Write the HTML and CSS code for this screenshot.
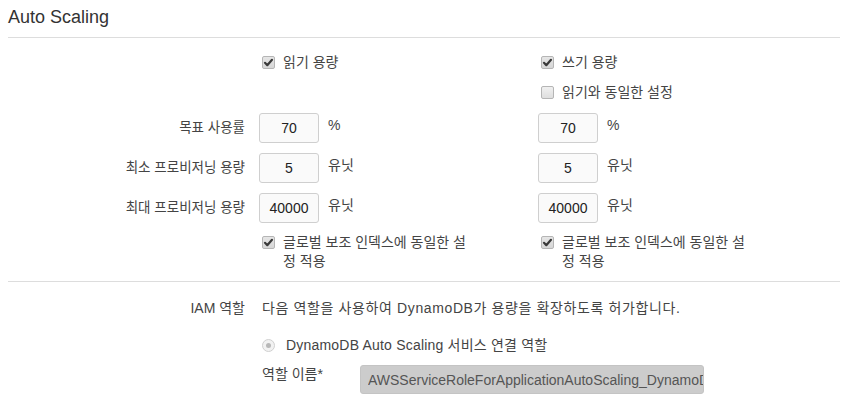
FILE: index.html
```html
<!DOCTYPE html>
<html lang="ko">
<head>
<meta charset="utf-8">
<title>Auto Scaling</title>
<link rel="stylesheet" href="styles.css">
</head>
<body>
<div class="panel">
  <h2 class="title">Auto Scaling</h2>
  <hr class="rule">
  <div class="grid">
    <div class="label"></div>
    <div class="cell"><label class="check"><span class="box on"><svg viewBox="0 0 13 13" width="13" height="13"><path d="M3 6.8 L5.3 9.2 L10 3.8" fill="none" stroke="#3a3a3a" stroke-width="2.2" stroke-linecap="round" stroke-linejoin="round"/></svg></span><span>읽기 용량</span></label></div>
    <div class="cell"><label class="check"><span class="box on"><svg viewBox="0 0 13 13" width="13" height="13"><path d="M3 6.8 L5.3 9.2 L10 3.8" fill="none" stroke="#3a3a3a" stroke-width="2.2" stroke-linecap="round" stroke-linejoin="round"/></svg></span><span>쓰기 용량</span></label></div>

    <div class="label"></div>
    <div class="cell"></div>
    <div class="cell"><label class="check"><span class="box"></span><span>읽기와 동일한 설정</span></label></div>
  </div>

  <div class="grid fields">
    <div class="label fl">목표 사용률</div>
    <div class="cell field"><input class="num" type="text" value="70" readonly><span class="unit">%</span></div>
    <div class="cell field"><input class="num" type="text" value="70" readonly><span class="unit">%</span></div>

    <div class="label fl">최소 프로비저닝 용량</div>
    <div class="cell field"><input class="num" type="text" value="5" readonly><span class="unit">유닛</span></div>
    <div class="cell field"><input class="num" type="text" value="5" readonly><span class="unit">유닛</span></div>

    <div class="label fl">최대 프로비저닝 용량</div>
    <div class="cell field"><input class="num" type="text" value="40000" readonly><span class="unit">유닛</span></div>
    <div class="cell field"><input class="num" type="text" value="40000" readonly><span class="unit">유닛</span></div>
  </div>

  <div class="grid gsi">
    <div class="label"></div>
    <div class="cell"><label class="check wrap"><span class="box on"><svg viewBox="0 0 13 13" width="13" height="13"><path d="M3 6.8 L5.3 9.2 L10 3.8" fill="none" stroke="#3a3a3a" stroke-width="2.2" stroke-linecap="round" stroke-linejoin="round"/></svg></span><span class="wraptext">글로벌 보조 인덱스에 동일한 설정 적용</span></label></div>
    <div class="cell"><label class="check wrap"><span class="box on"><svg viewBox="0 0 13 13" width="13" height="13"><path d="M3 6.8 L5.3 9.2 L10 3.8" fill="none" stroke="#3a3a3a" stroke-width="2.2" stroke-linecap="round" stroke-linejoin="round"/></svg></span><span class="wraptext">글로벌 보조 인덱스에 동일한 설정 적용</span></label></div>
  </div>

  <hr class="rule rule2">

  <div class="iam">
    <div class="label">IAM 역할</div>
    <div class="iam-body">
      <div class="desc">다음 역할을 사용하여 DynamoDB가 용량을 확장하도록 허가합니다.</div>
      <label class="radio"><span class="dot"></span><span class="radio-text">DynamoDB Auto Scaling 서비스 연결 역할</span></label>
      <div class="role">
        <span class="role-label">역할 이름*</span>
        <input class="role-input" type="text" value="AWSServiceRoleForApplicationAutoScaling_DynamoDBTable" disabled>
      </div>
    </div>
  </div>
</div>
</body>
</html>
```

FILE: styles.css
```css
html, body {
  margin: 0;
  padding: 0;
  background: #ffffff;
}

body {
  font-family: "Liberation Sans", "Noto Sans CJK KR", sans-serif;
  font-size: 14px;
  color: #444444;
}

.panel {
  width: 832px;
  padding: 7px 0 0 8px;
}

.title {
  margin: 0;
  font-size: 18px;
  line-height: 20px;
  font-weight: normal;
  color: #333333;
}

.rule {
  margin: 10px 0 0 0;
  border: 0;
  border-top: 1px solid #dddddd;
  height: 0;
}

.grid {
  display: grid;
  grid-template-columns: 251px 279px 1fr;
  row-gap: 10px;
  margin-top: 14px;
}

.label {
  text-align: right;
  padding-right: 14px;
  line-height: 20px;
}

.fl {
  font-size: 13.5px;
  line-height: 30px;
}

.cell {
  display: flex;
  align-items: center;
  min-height: 20px;
}

.check {
  display: flex;
  align-items: center;
  margin-left: 3px;
  line-height: 20px;
}

.box {
  width: 11px;
  height: 11px;
  border: 1px solid #b5b5b5;
  border-radius: 2px;
  background: linear-gradient(#e6e6e6, #d6d6d6);
  margin-right: 8px;
  position: relative;
  flex: none;
}

.box:not(.on) {
  background: linear-gradient(#f0f0f0, #dedede);
}

.box svg {
  position: absolute;
  left: -1px;
  top: -1px;
}

.fields {
  margin-top: 11px;
}

.field {
  height: 30px;
}

.num {
  box-sizing: border-box;
  width: 60px;
  height: 30px;
  margin: 0;
  padding: 0;
  border: 1px solid #cfcfcf;
  border-radius: 3px;
  background: #fafafa;
  text-align: center;
  font-family: "Liberation Sans", sans-serif;
  font-size: 14px;
  color: #222222;
  outline: none;
  flex: none;
}

.unit {
  margin-left: 9px;
  line-height: 20px;
  margin-top: -6px;
}

.gsi {
  margin-top: 10px;
}

.wrap {
  align-items: flex-start;
  line-height: 19px;
}

.wrap .box {
  margin-top: 3px;
}

.wraptext {
  width: 190px;
  word-break: break-all;
}

.rule2 {
  margin-top: 10px;
}

.iam {
  display: grid;
  grid-template-columns: 251px 1fr;
  margin-top: 16px;
}

.iam-body {
  padding-left: 3px;
}

.desc {
  line-height: 20px;
  letter-spacing: 0.62px;
}

.radio {
  display: flex;
  align-items: center;
  margin-top: 17px;
  line-height: 20px;
}

.radio-text {
  letter-spacing: 0.2px;
}

.dot {
  width: 11px;
  height: 11px;
  border: 1px solid #d0d0d0;
  border-radius: 50%;
  background: #f2f2f2;
  margin-right: 11px;
  position: relative;
  flex: none;
}

.dot::after {
  content: "";
  position: absolute;
  left: 3px;
  top: 3px;
  width: 5px;
  height: 5px;
  border-radius: 50%;
  background: #b8b8b8;
}

.role {
  display: flex;
  align-items: flex-start;
  margin-top: 10px;
}

.role-label {
  width: 98px;
  line-height: 18px;
}

.role-input {
  box-sizing: border-box;
  width: 344px;
  height: 29px;
  margin: 0;
  border: 1px solid #c4c4c4;
  border-radius: 3px;
  background: #cccccc;
  color: #555555;
  font-family: "Liberation Sans", sans-serif;
  font-size: 14px;
  padding: 0 0 0 7px;
  flex: none;
}
```
